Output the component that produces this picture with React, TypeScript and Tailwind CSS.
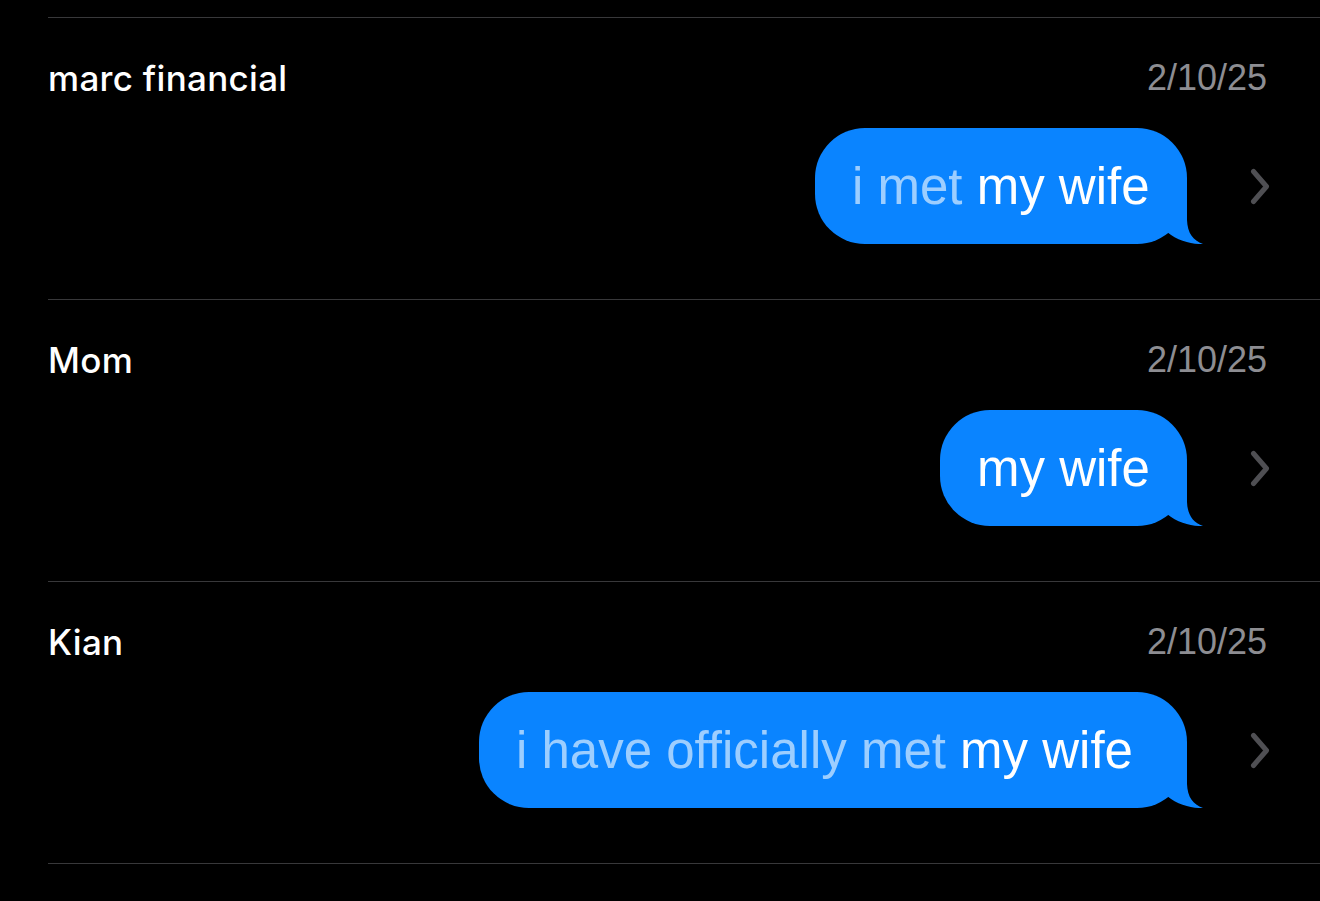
import React from "react";

type Row = {
  name: string;
  date: string;
  dim: string;
  bright: string;
  width: number;
};

const rows: Row[] = [
  { name: "marc financial", date: "2/10/25", dim: "i met ", bright: "my wife", width: 372 },
  { name: "Mom", date: "2/10/25", dim: "", bright: "my wife", width: 247 },
  { name: "Kian", date: "2/10/25", dim: "i have officially met ", bright: "my wife", width: 708 },
];

function Tail() {
  return (
    <svg
      className="absolute bottom-0 right-[-16px]"
      width="56"
      height="50"
      viewBox="0 0 56 50"
      aria-hidden="true"
    >
      <path
        d="M40 0 L40 26 C40.5 39 46 46.5 56 50 C45 50.5 31 47 20 38 L20 0 Z"
        fill="#0a84ff"
      />
    </svg>
  );
}

function Chevron() {
  return (
    <svg width="20" height="37" viewBox="0 0 20 37" aria-hidden="true">
      <polyline
        points="3.5,3.5 16.5,18.5 3.5,33.5"
        fill="none"
        stroke="#4f4f53"
        strokeWidth="5"
        strokeLinecap="round"
        strokeLinejoin="round"
      />
    </svg>
  );
}

function ConversationRow({ row }: { row: Row }) {
  return (
    <div className="ml-[48px] h-[282px] border-t border-[#38383a]">
      <div className="flex items-start justify-between pt-[42px] pr-[53px]">
        <div
          className="text-[35px] leading-[36px] font-medium tracking-[0.3px] text-white"
          style={{ fontFamily: "Inter, 'Liberation Sans', sans-serif" }}
        >
          {row.name}
        </div>
        <div className="text-[36px] leading-[36px] text-[#8d8d92] font-['Liberation_Sans',sans-serif]">
          {row.date}
        </div>
      </div>
      <div className="mt-[32px] flex items-center justify-end pr-[50px]">
        <div
          className="relative flex h-[116px] items-center rounded-[50px] bg-[#0a84ff] pl-[37px]"
          style={{ width: row.width }}
        >
          <span className="relative z-10 whitespace-pre text-[51px] leading-none font-['Liberation_Sans',sans-serif]">
            {row.dim && <span className="text-[#9dceff]">{row.dim}</span>}
            <span className="text-white">{row.bright}</span>
          </span>
          <Tail />
        </div>
        <div className="ml-[63px] flex h-[37px] w-[20px] items-center">
          <Chevron />
        </div>
      </div>
    </div>
  );
}

export default function App() {
  return (
    <div className="min-h-screen w-full bg-black pt-[17px]">
      {rows.map((r) => (
        <ConversationRow key={r.name} row={r} />
      ))}
      <div className="ml-[48px] border-t border-[#38383a]" />
    </div>
  );
}
